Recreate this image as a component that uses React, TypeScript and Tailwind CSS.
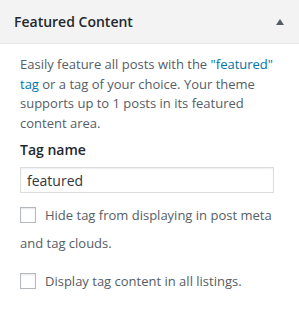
import React, { useState } from 'react';

const font = { fontFamily: '"Open Sans", "Noto Sans", sans-serif' };

export default function App() {
  const [tag, setTag] = useState('featured');
  const [hide, setHide] = useState(false);
  const [all, setAll] = useState(false);

  return (
    <div className="w-[299px] h-[317px] bg-white text-[#555d66]" style={font}>
      {/* Section header */}
      <div className="h-[44px] bg-[#f3f3f3] border-b border-[#e5e5e5] flex items-center justify-between pl-[14px] pr-[15px]">
        <h3 className="text-[14px] font-semibold text-[#23282d] leading-none">Featured Content</h3>
        <svg width="8" height="6" viewBox="0 0 8 6" className="mt-[1px]">
          <path d="M4 0 L8 6 L0 6 Z" fill="#555d66" />
        </svg>
      </div>

      {/* Body */}
      <div className="px-[20px] pt-[11px]">
        <p className="text-[13px] leading-[19.5px]">
          Easily feature all posts with the{' '}
          <a href="#" className="text-[#0073aa]">"featured" tag</a> or a tag of your choice. Your theme supports up to 1 posts in its featured content area.
        </p>

        <label className="block mt-[7px] text-[14px] font-semibold leading-[20px] text-[#23282d]">Tag name</label>
        <input
          type="text"
          value={tag}
          onChange={(e) => setTag(e.target.value)}
          className="mt-[7px] block w-[254px] h-[26px] border border-[#ddd] shadow-[inset_0_1px_2px_rgba(0,0,0,0.07)] px-[6px] text-[14px] text-[#32373c] outline-none"
        />

        <label className="block mt-[8px] text-[13px] leading-[28px]">
          <input
            type="checkbox"
            checked={hide}
            onChange={(e) => setHide(e.target.checked)}
            className="appearance-none inline-block align-[-3px] w-[16px] h-[16px] border border-[#b4b9be] bg-white shadow-[inset_0_1px_2px_rgba(0,0,0,0.1)] mr-[9px]"
          />
          Hide tag from displaying in post meta and tag clouds.
        </label>

        <label className="block mt-[10px] text-[13px] leading-[28px]">
          <input
            type="checkbox"
            checked={all}
            onChange={(e) => setAll(e.target.checked)}
            className="appearance-none inline-block align-[-3px] w-[16px] h-[16px] border border-[#b4b9be] bg-white shadow-[inset_0_1px_2px_rgba(0,0,0,0.1)] mr-[9px]"
          />
          Display tag content in all listings.
        </label>
      </div>
    </div>
  );
}
